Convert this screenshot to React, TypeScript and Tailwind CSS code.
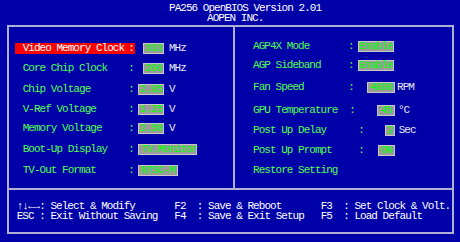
import React from "react";

type LRow = {
  label: string;
  mt: string;
  sel?: boolean;
  boxMl: string;
  boxW: string;
  value: string;
  left?: boolean;
  unit?: string;
};

const leftRows: LRow[] = [
  { label: "Video Memory Clock", mt: "mt-[16px]", sel: true, boxMl: "ml-[7.7px]", boxW: "w-[21.3px]", value: "333", unit: "MHz" },
  { label: "Core Chip Clock", mt: "mt-[9px]", boxMl: "ml-[7.7px]", boxW: "w-[21.3px]", value: "200", unit: "MHz" },
  { label: "Chip Voltage", mt: "mt-[10px]", boxMl: "ml-[3px]", boxW: "w-[26px]", value: "2.85", unit: "V" },
  { label: "V-Ref Voltage", mt: "mt-[9px]", boxMl: "ml-[3px]", boxW: "w-[26px]", value: "1.25", unit: "V" },
  { label: "Memory Voltage", mt: "mt-[8px]", boxMl: "ml-[3px]", boxW: "w-[26px]", value: "2.50", unit: "V" },
  { label: "Boot-Up Display", mt: "mt-[10px]", boxMl: "ml-[3px]", boxW: "w-[59px]", value: "TV.Monitor", left: true },
  { label: "TV-Out Format", mt: "mt-[9.5px]", boxMl: "ml-[3px]", boxW: "w-[40px]", value: "NTSC-M", left: true },
];

type RRow = {
  label: string;
  mt: string;
  labelW?: string;
  boxMl?: string;
  boxW?: string;
  value?: string;
  unit?: string;
  unitMl?: string;
};

const rightRows: RRow[] = [
  { label: "AGP4X Mode", mt: "mt-[13.5px]", labelW: "w-[94.9px]", boxMl: "ml-[4.5px]", boxW: "w-[35.7px]", value: "Enable" },
  { label: "AGP Sideband", mt: "mt-[8px]", labelW: "w-[94.9px]", boxMl: "ml-[4.5px]", boxW: "w-[35.7px]", value: "Enable" },
  { label: "Fan Speed", mt: "mt-[11.5px]", labelW: "w-[95.2px]", boxMl: "ml-[13.5px]", boxW: "w-[27.4px]", value: "4800", unit: "RPM", unitMl: "ml-[2.3px]" },
  { label: "GPU Temperature", mt: "mt-[12px]", labelW: "w-[96.2px]", boxMl: "ml-[22.2px]", boxW: "w-[17.7px]", value: "45", unit: "°C", unitMl: "ml-[3.3px]" },
  { label: "Post Up Delay", mt: "mt-[9px]", labelW: "w-[105.2px]", boxMl: "ml-[20.9px]", boxW: "w-[10px]", value: "2", unit: "Sec", unitMl: "ml-[4px]" },
  { label: "Post Up Prompt", mt: "mt-[9px]", labelW: "w-[105.2px]", boxMl: "ml-[14.2px]", boxW: "w-[16.7px]", value: "ON" },
  { label: "Restore Setting", mt: "mt-[9px]" },
];

function Box({ w, ml, value, left }: { w: string; ml: string; value: string; left?: boolean }) {
  return (
    <span
      className={`${w} ${ml} h-[11px] flex items-center ${left ? "justify-start pl-[2px]" : "justify-center"} bg-[#9c9c9c] border border-[#c8c8c8] text-[#00ff00] whitespace-pre`}
    >
      {value}
    </span>
  );
}

export default function App() {
  return (
    <div className="w-[460px] h-[242px] bg-[#0000a8] font-['Liberation_Mono',monospace] text-[11px] leading-[10px] tracking-[-0.97px] text-white overflow-hidden">
      <div className="pt-[2.6px] h-[25px]">
        <div className="pl-[169px] whitespace-pre">PA256 OpenBIOS Version 2.01</div>
        <div className="pl-[207px] whitespace-pre">AOPEN INC.</div>
      </div>
      <div className="ml-[7px] w-[447px] h-[209px] border-2 border-[#b0b0d4] flex flex-col">
        <div className="h-[161px] flex">
          <div className="w-[224px] flex flex-col leading-[11px]">
            {leftRows.map((r) => (
              <div key={r.label} className={`${r.mt} h-[11px] flex items-center pl-[6px]`}>
                <span className={`flex h-[11px] items-center pl-[7.7px] pr-[1.2px] ${r.sel ? "bg-[#ff0000] text-white" : "text-[#50ff50]"}`}>
                  <span className="w-[105.5px] whitespace-pre">{r.label}</span>
                  <span className="w-[5.63px]">:</span>
                </span>
                <Box w={r.boxW} ml={r.boxMl} value={r.value} left={r.left} />
                {r.unit && <span className="ml-[5px] text-[#e8e8f0]">{r.unit}</span>}
              </div>
            ))}
          </div>
          <div className="flex-1 border-l-2 border-[#b0b0d4] flex flex-col leading-[11px] pl-[18px]">
            {rightRows.map((r) => (
              <div key={r.label} className={`${r.mt} h-[11px] flex items-center text-[#50ff50]`}>
                <span className={`${r.labelW ?? ""} whitespace-pre`}>{r.label}</span>
                {r.value && <span className="w-[5.63px]">:</span>}
                {r.value && r.boxW && r.boxMl && <Box w={r.boxW} ml={r.boxMl} value={r.value} />}
                {r.unit && <span className={`${r.unitMl} text-[#e8e8f0]`}>{r.unit}</span>}
              </div>
            ))}
          </div>
        </div>
        <div className="flex-1 border-t-2 border-[#b0b0d4] pt-[11px] pl-[7.7px] leading-[10px]">
          <div className="flex whitespace-pre h-[10px]">
            <span className="w-[157.6px]">↑↓←→: Select &amp; Modify</span>
            <span className="w-[146.4px]">F2  : Save &amp; Reboot</span>
            <span>F3  : Set Clock &amp; Volt.</span>
          </div>
          <div className="flex whitespace-pre h-[10px]">
            <span className="w-[157.6px]">ESC : Exit Without Saving</span>
            <span className="w-[146.4px]">F4  : Save &amp; Exit Setup</span>
            <span>F5  : Load Default</span>
          </div>
        </div>
      </div>
    </div>
  );
}
